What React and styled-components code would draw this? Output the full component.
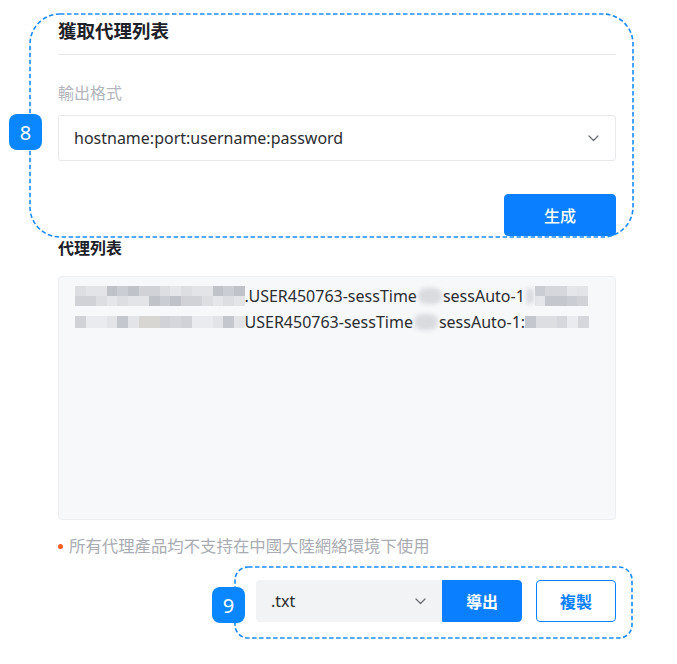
import React from "react";
import styled, { createGlobalStyle } from "styled-components";

const Global = createGlobalStyle`
  html, body { margin: 0; padding: 0; background: #ffffff; }
  body { font-family: "Noto Sans", "Noto Sans CJK TC", sans-serif; color: #1f2329; }
  * { box-sizing: border-box; }
`;

const Page = styled.div`
  width: 677px;
  padding: 14px 61px 20px 58px;
  display: flex;
  flex-direction: column;
`;

const Section = styled.section`
  position: relative;
  display: flex;
  flex-direction: column;
`;

const OutlineSvg = styled.svg`
  position: absolute;
  top: ${(p) => p.$top}px;
  bottom: ${(p) => p.$bottom}px;
  left: ${(p) => p.$left}px;
  right: ${(p) => p.$right}px;
  width: calc(100% - ${(p) => p.$left + p.$right}px);
  height: calc(100% - ${(p) => p.$top + p.$bottom}px);
  overflow: visible;
  pointer-events: none;
`;

const Outline = (props) => (
  <OutlineSvg {...props}>
    <rect
      x="0"
      y="0"
      width="100%"
      height="100%"
      rx={props.$radius}
      ry={props.$radius}
      fill="none"
      stroke="#1a8bff"
      strokeWidth="1.6"
      strokeDasharray="4.5 2.5"
    />
  </OutlineSvg>
);

const Badge = styled.div`
  position: absolute;
  left: ${(p) => p.$left}px;
  top: ${(p) => p.$top}px;
  width: 33px;
  height: 36px;
  border-radius: 8px;
  background: #0a87ff;
  color: #fff;
  font-family: "Noto Sans", sans-serif;
  font-size: 20px;
  display: flex;
  align-items: center;
  justify-content: center;
  z-index: 2;
`;

const Header = styled.div`
  line-height: 34px;
  padding-bottom: 6px;
  border-bottom: 1px solid #e8e9ec;
  font-size: 18.5px;
  font-weight: 700;
  color: #1d2129;
`;

const Label = styled.div`
  margin-top: 26px;
  line-height: 24px;
  font-size: 16px;
  color: #b3b6bd;
`;

const SelectBox = styled.div`
  display: flex;
  align-items: center;
  justify-content: space-between;
  height: ${(p) => p.$h}px;
  width: ${(p) => (p.$w ? `${p.$w}px` : "auto")};
  margin-top: ${(p) => p.$mt || 0}px;
  padding: 0 16px 0 15px;
  background: ${(p) => (p.$filled ? "#f2f3f5" : "#ffffff")};
  border: ${(p) => (p.$filled ? "none" : "1px solid #e6e8ec")};
  border-radius: ${(p) => (p.$filled ? "4px 0 0 4px" : "3px")};
  font-size: 16px;
  color: #2b2d31;
`;

const Chevron = () => (
  <svg width="11" height="7" viewBox="0 0 11 7" fill="none">
    <path d="M1 1l4.5 4.5L10 1" stroke="#6b6e75" strokeWidth="1.3" strokeLinecap="round" strokeLinejoin="round" />
  </svg>
);

const ButtonRow = styled.div`
  display: flex;
  justify-content: flex-end;
  margin-top: 33px;
`;

const Button = styled.button`
  height: 42px;
  width: ${(p) => p.$w}px;
  border: 1px solid #0a7fff;
  background: ${(p) => (p.$outline ? "#ffffff" : "#0a7fff")};
  color: ${(p) => (p.$outline ? "#0a7fff" : "#ffffff")};
  border-radius: ${(p) => p.$radius || "4px"};
  font-family: "Noto Sans CJK TC", sans-serif;
  font-size: 16px;
  font-weight: ${(p) => (p.$bold ? 700 : 500)};
  padding: 0;
  cursor: pointer;
`;

const SubTitle = styled.div`
  line-height: 24px;
  font-size: 16px;
  font-weight: 700;
  color: #1d2129;
`;

const ListArea = styled.div`
  margin-top: 16px;
  height: 244px;
  background: #f7f8fa;
  border: 1px solid #eceef1;
  border-radius: 4px;
  padding: 6px 16px;
  font-size: 16px;
  color: #2b2d31;
`;

const Line = styled.div`
  display: flex;
  align-items: center;
  height: 26px;
  white-space: nowrap;
`;

const Mosaic = styled.span`
  display: inline-grid;
  grid-template-columns: repeat(${(p) => p.$cols}, ${(p) => p.$cell}px);
  grid-auto-rows: ${(p) => p.$row}px;
  flex: none;
`;

const Cell = styled.span`
  background: ${(p) => p.$c};
`;

const Smudge = styled.span`
  display: inline-block;
  width: ${(p) => p.$w}px;
  height: 16px;
  background: #d9dbdf;
  border-radius: 8px;
  filter: blur(2px);
  margin: 0 1px;
  flex: none;
`;

const Note = styled.div`
  margin-top: 14px;
  line-height: 24px;
  font-size: 16.4px;
  color: #a9acb3;
  display: flex;
  align-items: center;
  gap: 6px;
`;

const Dot = styled.span`
  width: 5px;
  height: 5px;
  border-radius: 50%;
  background: #ff5b1f;
  flex: none;
`;

const ActionRow = styled.div`
  margin-top: 22px;
  display: flex;
  justify-content: flex-end;
`;

const ActionGroup = styled.div`
  position: relative;
  display: flex;
  align-items: center;
`;

const Spacer = styled.div`
  width: 14px;
`;

const palette = ["#d5d7dc", "#e2e4e8", "#cacdd3", "#dcdee2", "#e9ebee", "#c4c7cd", "#d0d2d7", "#e5e6e9", "#bfc2c8", "#d8d6d3"];
const cells = (n, seed) => Array.from({ length: n }, (_, i) => palette[(i * 7 + seed * 3 + ((i * i) % 5)) % palette.length]);

const MosaicBlock = ({ cols, rows, cell, row, seed }) => (
  <Mosaic $cols={cols} $cell={cell} $row={row}>
    {cells(cols * rows, seed).map((c, i) => (
      <Cell key={i} $c={c} />
    ))}
  </Mosaic>
);

export default function App() {
  return (
    <>
      <Global />
      <Page>
        <Section>
          <Outline $top={0} $bottom={-1} $left={-28} $right={-17} $radius={30} />
          <Badge $left={-49} $top={100}>8</Badge>
          <Header>獲取代理列表</Header>
          <Label>輸出格式</Label>
          <SelectBox $h={46} $mt={10}>
            <span>hostname:port:username:password</span>
            <Chevron />
          </SelectBox>
          <ButtonRow>
            <Button $w={112}>生成</Button>
          </ButtonRow>
        </Section>

        <SubTitle>代理列表</SubTitle>
        <ListArea>
          <Line>
            <MosaicBlock cols={16} rows={2} cell={10.6} row={10} seed={1} />
            <span>.USER450763-sessTime</span>
            <Smudge $w={24} />
            <span>sessAuto-1</span>
            <Smudge $w={8} />
            <MosaicBlock cols={5} rows={2} cell={10.6} row={10} seed={4} />
          </Line>
          <Line>
            <MosaicBlock cols={16} rows={1} cell={10.6} row={12} seed={2} />
            <span>USER450763-sessTime</span>
            <Smudge $w={24} />
            <span>sessAuto-1:</span>
            <MosaicBlock cols={6} rows={1} cell={10.6} row={12} seed={5} />
          </Line>
        </ListArea>

        <Note>
          <Dot />
          <span>所有代理產品均不支持在中國大陸網絡環境下使用</span>
        </Note>

        <ActionRow>
          <ActionGroup>
            <Outline $top={-13} $bottom={-16} $left={-21} $right={-16} $radius={13} />
            <Badge $left={-44} $top={7}>9</Badge>
            <SelectBox $h={42} $w={186} $filled>
              <span>.txt</span>
              <Chevron />
            </SelectBox>
            <Button $w={80} $bold $radius="0 4px 4px 0">導出</Button>
            <Spacer />
            <Button $w={80} $bold $outline>複製</Button>
          </ActionGroup>
        </ActionRow>
      </Page>
    </>
  );
}
